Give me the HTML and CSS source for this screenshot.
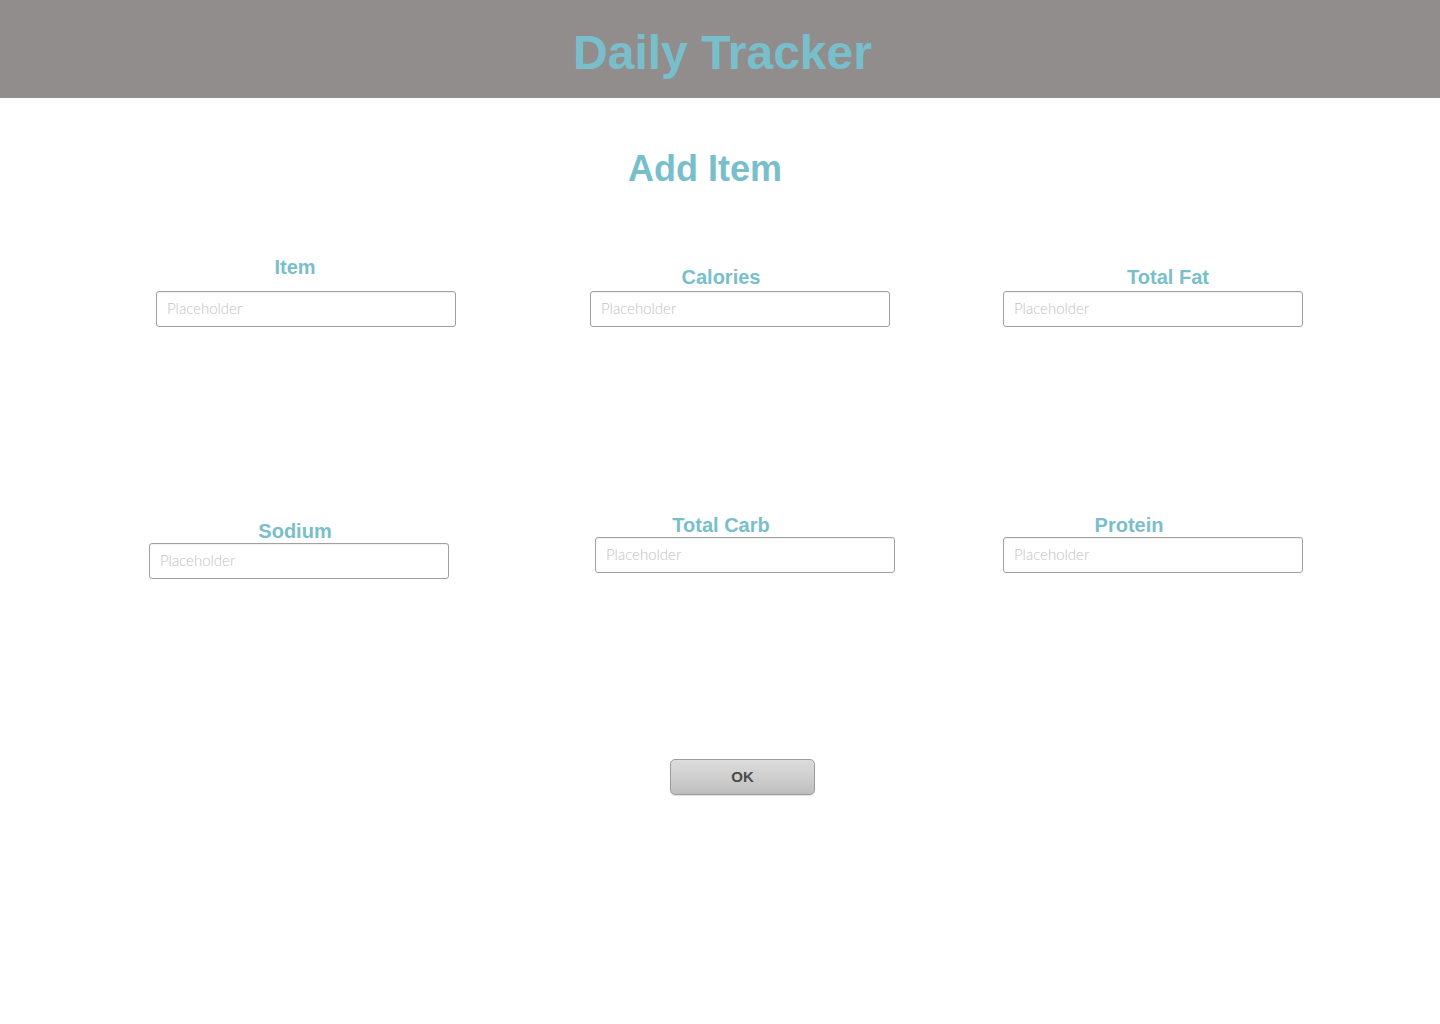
FILE: index.html
```html
<!DOCTYPE html>
<html lang="en">
<head>
<meta charset="utf-8">
<title>Daily Tracker</title>
<link rel="stylesheet" href="styles.css">
</head>
<body>
<header class="topbar">
  <h1 class="app-title">Daily Tracker</h1>
</header>
<main class="content">
  <h2 class="section-title">Add Item</h2>
  <div class="form-row form-row--top">
    <div class="field field--item">
      <label class="field-label">Item</label>
      <input class="field-input" type="text" placeholder="Placeholder">
    </div>
    <div class="field field--calories">
      <label class="field-label">Calories</label>
      <input class="field-input" type="text" placeholder="Placeholder">
    </div>
    <div class="field field--fat">
      <label class="field-label">Total Fat</label>
      <input class="field-input" type="text" placeholder="Placeholder">
    </div>
  </div>
  <div class="form-row form-row--bottom">
    <div class="field field--sodium">
      <label class="field-label">Sodium</label>
      <input class="field-input" type="text" placeholder="Placeholder">
    </div>
    <div class="field field--carb">
      <label class="field-label">Total Carb</label>
      <input class="field-input" type="text" placeholder="Placeholder">
    </div>
    <div class="field field--protein">
      <label class="field-label">Protein</label>
      <input class="field-input" type="text" placeholder="Placeholder">
    </div>
  </div>
  <div class="actions">
    <button class="btn-ok" type="button">OK</button>
  </div>
</main>
</body>
</html>
```

FILE: styles.css
```css
* { box-sizing: border-box; }

html, body {
  margin: 0;
  padding: 0;
  background: #ffffff;
  font-family: "Liberation Sans", Arial, sans-serif;
}

.topbar {
  height: 98px;
  background: #918d8c;
  padding-top: 29px;
  padding-left: 5px;
}

.app-title {
  margin: 0;
  font-size: 48px;
  line-height: 48px;
  font-weight: bold;
  color: #79bfcb;
  text-align: center;
}

.content {
  padding-bottom: 40px;
}

.section-title {
  margin: 53px 0 0 0;
  padding-right: 30px;
  font-size: 36px;
  line-height: 36px;
  font-weight: bold;
  color: #79bfcb;
  text-align: center;
}

.form-row {
  display: flex;
}

.form-row--top {
  margin-top: 68px;
  padding-left: 156px;
  align-items: flex-end;
}

.form-row--bottom {
  margin-top: 186px;
  padding-left: 149px;
  align-items: flex-start;
}

.field {
  width: 300px;
  display: flex;
  flex-direction: column;
}

.field-label {
  display: block;
  font-size: 20px;
  line-height: 24px;
  font-weight: bold;
  color: #79bfcb;
  text-align: center;
  white-space: nowrap;
}

.field-input {
  width: 300px;
  height: 36px;
  margin: 0;
  border: 1px solid #a0a0a0;
  border-radius: 3px;
  padding: 0 10px 3px 10px;
  font-family: "Lato", "Open Sans", sans-serif;
  font-weight: 300;
  font-size: 15px;
  color: #333333;
  background: #ffffff;
  box-shadow: inset 0 1px 1px rgba(0, 0, 0, 0.06);
  outline: none;
}

.field-input::placeholder {
  color: #c2c2c2;
}

.field--item .field-label { padding-right: 22px; margin-bottom: 12px; }
.field--calories { margin-left: 134px; }
.field--calories .field-label { padding-right: 38px; margin-bottom: 2px; }
.field--fat { margin-left: 113px; }
.field--fat .field-label { padding-left: 30px; margin-bottom: 2px; }

.field--sodium { margin-top: 6px; }
.field--sodium .field-label { padding-right: 8px; }
.field--carb { margin-left: 146px; }
.field--carb .field-label { padding-right: 48px; }
.field--protein { margin-left: 108px; }
.field--protein .field-label { padding-right: 48px; }

.actions {
  margin-top: 180px;
  padding-left: 670px;
}

.btn-ok {
  width: 145px;
  height: 36px;
  border: 1px solid #9c9c9c;
  border-radius: 5px;
  background: linear-gradient(to bottom, #dcdcdc 0%, #cdcdcd 55%, #bdbdbd 100%);
  box-shadow: 0 1px 1px rgba(0, 0, 0, 0.12);
  font-family: "Liberation Sans", Arial, sans-serif;
  font-weight: bold;
  font-size: 15px;
  color: #4a4a4a;
  padding: 0 0 2px 0;
  cursor: pointer;
}
```
